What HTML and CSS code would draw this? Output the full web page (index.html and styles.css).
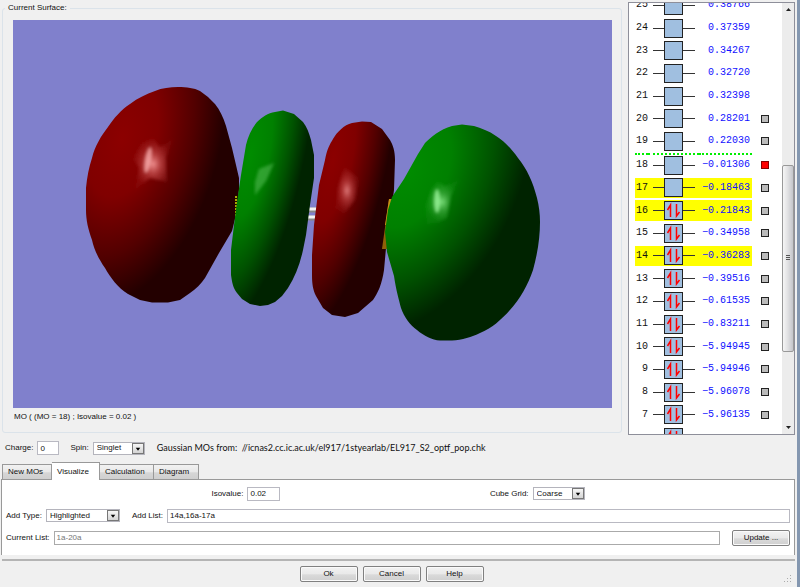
FILE: index.html
```html
<!DOCTYPE html>
<html lang="en">
<head>
    <meta charset="UTF-8">
    <meta name="viewport" content="width=device-width, initial-scale=1.0">
    <title>MOs</title>
    <link rel="stylesheet" href="styles.css">
</head>
<body>
    <main class="window">
        <div class="top">
            <fieldset class="surface">
                <legend>Current Surface:</legend>
                <svg class="scene" viewBox="13 20 599 388" preserveAspectRatio="none" role="img" aria-label="Molecular orbital surface">
                    <defs>
                        <radialGradient id="red1" gradientUnits="userSpaceOnUse" cx="0" cy="0" r="1" gradientTransform="translate(122 138) rotate(14) scale(98 172)">
                            <stop offset="0" stop-color="#8c0000"/>
                            <stop offset="0.35" stop-color="#800000"/>
                            <stop offset="0.7" stop-color="#520000"/>
                            <stop offset="1" stop-color="#230000"/>
                        </radialGradient>
                        <radialGradient id="green1" gradientUnits="userSpaceOnUse" cx="0" cy="0" r="1" gradientTransform="translate(250 155) rotate(12) scale(54 180)">
                            <stop offset="0" stop-color="#008c00"/>
                            <stop offset="0.35" stop-color="#008000"/>
                            <stop offset="0.7" stop-color="#005200"/>
                            <stop offset="1" stop-color="#002300"/>
                        </radialGradient>
                        <radialGradient id="red2" gradientUnits="userSpaceOnUse" cx="0" cy="0" r="1" gradientTransform="translate(333 160) rotate(12) scale(54 180)">
                            <stop offset="0" stop-color="#8c0000"/>
                            <stop offset="0.35" stop-color="#800000"/>
                            <stop offset="0.7" stop-color="#520000"/>
                            <stop offset="1" stop-color="#230000"/>
                        </radialGradient>
                        <radialGradient id="green2" gradientUnits="userSpaceOnUse" cx="0" cy="0" r="1" gradientTransform="translate(408 170) rotate(24) scale(112 172)">
                            <stop offset="0" stop-color="#008c00"/>
                            <stop offset="0.35" stop-color="#008000"/>
                            <stop offset="0.7" stop-color="#005200"/>
                            <stop offset="1" stop-color="#002300"/>
                        </radialGradient>
                        <radialGradient id="shineRed">
                            <stop offset="0" stop-color="#f09090"/>
                            <stop offset="0.4" stop-color="#c85050" stop-opacity="0.7"/>
                            <stop offset="1" stop-color="#a02020" stop-opacity="0.2"/>
                        </radialGradient>
                        <radialGradient id="shineGreen">
                            <stop offset="0" stop-color="#90f090"/>
                            <stop offset="0.4" stop-color="#50b850" stop-opacity="0.7"/>
                            <stop offset="1" stop-color="#20a020" stop-opacity="0.2"/>
                        </radialGradient>
                        <filter id="soft" x="-30%" y="-30%" width="160%" height="160%">
                            <feGaussianBlur stdDeviation="1.5"/>
                        </filter>
                    </defs>
                    <rect x="13" y="20" width="599" height="388" fill="#8080cc"/>
                    <!-- bonds -->
                    <path d="M308 210h9M308 218h9" stroke="#888" stroke-width="5"/>
                    <path d="M308 209h9M308 217h9" stroke="#f4f4f4" stroke-width="3"/>
                    <!-- lobes, left to right -->
                    <path fill="url(#red1)" d="M178 87C187 87 194 88 200 91L208 97L215 104C220 110 223 117 226 126L232 148L236 165L239 178V190L236 215L232 231L219 253L205 278C201 284 196 289 190 293L180 300L168 302.500H152L140 300L128 294C118 288 110 277 105 268C98 258 94 249 92 240C88 229 86 220 86 210V188C87 177 89 167 92 158C95 146 101 136 108 127C114 118 121 110 130 104C138 98 146 94 155 91C162 88 170 87 178 87Z"/>
                    <path d="M236 196v20" stroke="#aa0" stroke-width="2" stroke-dasharray="2 1"/>
                    <path fill="url(#green1)" d="M275 112L283 110.500L294 114L303 122C307 127 309 133 311 140L314 155V178L310 205L306 235L303 250C300 264 295 277 288 288L282 296L275 302L268 305L260 306L250 304L242 299L237 293C233 288 232 282 231 275V250L234 225L238 195L241 175L246 145C248 136 252 128 257 122C262 117 268 113 275 112Z"/>
                    <path fill="url(#red2)" d="M352 123L362 121.500L371 122L382 129L390 140C393 145 395 151 395 160L394 190L390 220L386 248L384 270C382 284 378 293 373 300L358 313L345 317L332 315L323 308L316 296C313 290 312 284 312 275V255L314 225L319 185L325 160C327 149 330 144 333 139C337 132 344 125 352 123Z"/>
                    <path d="M389 199h4l-5 50h-6z" fill="#906008"/>
                    <path d="M389 199h3l-3 26h-4z" fill="#c89018"/>
                    <path fill="url(#green2)" d="M452 126L462 124.500L474 126C481 128 489 131 496 136C504 141 511 148 518 158C527 169 533 182 537 198C539 206 540 214 540 222C540 236 538 252 533 270C528 285 520 299 510 310C501 320 492 328 480 333C472 337 462 340 452 340.500H440C432 340 424 336 417 330C410 325 404 317 401 308C399 300 396 290 394 276L387 252L385 232L388 210L392 197L404 179L418 154L425 143C430 138 440 129 452 126Z"/>
                    <!-- specular spots -->
                    <g filter="url(#soft)">
                        <path d="M142 143L153 138L160 147L173 139L166 157L167 182L150 178L135 190L139 168L133 158Z" fill="url(#shineRed)"/>
                        <ellipse cx="148" cy="160" rx="3" ry="13" transform="rotate(10 148 160)" fill="#ffb8b8" opacity="0.7"/>
                        <path d="M259 169L274 163L266 181L255 195L255 182Z" fill="#50b850" opacity="0.6"/>
                        <path d="M344 167L359 178L355 200L344 214L335 208L338 188Z" fill="url(#shineRed)" opacity="0.85"/>
                        <path d="M437 181L445 186L459 180L451 196L447 218L437 223L427 224L425 208L431 190Z" fill="url(#shineGreen)" opacity="0.85"/>
                        <ellipse cx="437" cy="201" rx="3" ry="12" fill="#a8ffa8" opacity="0.7"/>
                    </g>
                </svg>
                <p class="caption">MO ( (MO = 18) ; Isovalue = 0.02 )</p>
            </fieldset>

            <div class="levels">
                <div class="levels-view">
                    <table class="levels-table" aria-label="Orbital energies">
                        <tbody id="levels"></tbody>
                    </table>
                </div>
                <div class="scrollbar" aria-hidden="true">
                    <svg class="scroll-arrow" viewBox="0 0 12 14"><path d="M4 8h5l-2.500-3z" fill="#222"/></svg>
                    <div class="scroll-before"></div>
                    <div class="scroll-thumb"><i></i></div>
                    <div class="scroll-after"></div>
                    <svg class="scroll-arrow" viewBox="0 0 12 14"><path d="M4 6h5l-2.500 3z" fill="#222"/></svg>
                </div>
            </div>
        </div>

        <div class="source-row">
            <label for="charge">Charge:</label>
            <input class="field charge" id="charge" type="text" value="0">
            <label for="spin">Spin:</label>
            <span class="combo combo-short">
                <select id="spin"><option>Singlet</option></select>
                <svg class="combo-arrow" viewBox="0 0 12 12"><path d="M3 5h6l-3 4z"/></svg>
            </span>
            <span class="source">Gaussian MOs from:&nbsp; //icnas2.cc.ic.ac.uk/el917/1styearlab/EL917_S2_optf_pop.chk</span>
        </div>

        <div class="tabs" role="tablist">
            <button class="tab tab-new" role="tab">New MOs</button>
            <button class="tab tab-visualize active" role="tab" aria-selected="true">Visualize</button>
            <button class="tab tab-calculation" role="tab">Calculation</button>
            <button class="tab tab-diagram" role="tab">Diagram</button>
        </div>
        <div class="panel" role="tabpanel">
            <div class="row row-spread">
                <div class="pair">
                    <label for="isovalue">Isovalue:</label>
                    <input class="field isovalue" id="isovalue" type="text" value="0.02">
                </div>
                <div class="pair">
                    <label for="grid">Cube Grid:</label>
                    <span class="combo combo-short">
                        <select id="grid"><option>Coarse</option></select>
                        <svg class="combo-arrow" viewBox="0 0 12 12"><path d="M3 5h6l-3 4z"/></svg>
                    </span>
                </div>
            </div>
            <div class="row">
                <label for="addType">Add Type:</label>
                <span class="combo combo-long">
                    <select id="addType"><option>Highlighted</option></select>
                    <svg class="combo-arrow" viewBox="0 0 12 12"><path d="M3 5h6l-3 4z"/></svg>
                </span>
                <label class="list-label" for="addList">Add List:</label>
                <input class="field grow" id="addList" type="text" value="14a,16a-17a">
            </div>
            <div class="row">
                <label for="currentList">Current List:</label>
                <input class="field grow" id="currentList" type="text" value="1a-20a" disabled>
                <button class="button update">Update ...</button>
            </div>
        </div>

        <footer class="footer">
            <button class="button">Ok</button>
            <button class="button">Cancel</button>
            <button class="button">Help</button>
            <svg class="grip" viewBox="0 0 8 8" aria-hidden="true"><path d="M6 0h1v1h-1zM3 3h1v1h-1zM6 3h1v1h-1zM0 6h1v1h-1zM3 6h1v1h-1zM6 6h1v1h-1z" fill="#aaa"/></svg>
        </footer>
    </main>

    <script>
        const levels = [
            [25, '0.38766'], [24, '0.37359'], [23, '0.34267'], [22, '0.32720'],
            [21, '0.32398'], [20, '0.28201'], [19, '0.22030'], [18, '-0.01306'],
            [17, '-0.18463'], [16, '-0.21843'], [15, '-0.34958'], [14, '-0.36283'],
            [13, '-0.39516'], [12, '-0.61535'], [11, '-0.83211'], [10, '-5.94945'],
            [9, '-5.94946'], [8, '-5.96078'], [7, '-5.96135'], [6, '']
        ];
        const highlighted = [17, 16, 14];
        const homo = 16;
        const current = 18;

        function orbital(n) {
            const arrows = n <= homo
                ? '<path d="M17.500 16V4L14.500 9M23.500 3V15L26.500 11" fill="none" stroke="#f00" stroke-width="1.500"/>'
                : '';
            return '<svg class="orbital" viewBox="0 0 42 19">' +
                '<path d="M0 9.500H42" stroke="#333"/>' +
                '<rect x="11.500" y="0.500" width="18" height="18" fill="#a0bfe0" stroke="#222"/>' +
                arrows + '</svg>';
        }

        document.getElementById('levels').innerHTML = levels.map(function([n, energy]) {
            const classes = [];
            if (highlighted.includes(n)) classes.push('highlighted');
            if (n === current) classes.push('divider');
            // only surfaces that have been computed get a box
            const box = n <= 20 && n > 6
                ? `<input type="checkbox" aria-label="Surface ${n}"${n === current ? ' checked' : ''}>`
                : '';
            return `<tr class="${classes.join(' ')}">
                <td class="number">${n > 6 ? n : ''}</td>
                <td class="diagram">${orbital(n)}</td>
                <td class="energy">${energy.replace('-', '−')}</td>
                <td class="toggle">${box}</td>
            </tr>`;
        }).join('');
    </script>
</body>
</html>
```
FILE: styles.css
```css
* {
    box-sizing: border-box;
}
body {
    margin: 0;
    font-family: "Liberation Sans", Arial, sans-serif;
    font-size: 8px;
    line-height: 10px;
    color: #111;
    background: #f0f0f0;
}
input, select, button {
    font: inherit;
    color: inherit;
    margin: 0;
}
.window {
    display: flex;
    flex-direction: column;
    height: 100vh;
    padding: 2px 2px 0 2px;
    border-right: 3px solid #8497b0;
}

/* surface view and energy levels */
.top {
    display: flex;
    flex: 1;
    min-height: 0;
    gap: 6px;
}
.surface {
    display: flex;
    flex-direction: column;
    flex: 1;
    min-width: 0;
    margin: 0 0 2px;
    padding: 6px 9px 10px 10px;
    border: 1px solid #dbe3ea;
    border-radius: 3px;
}
.surface legend {
    padding: 0 3px;
    margin-left: -8px;
    line-height: 12px;
}
.scene {
    display: block;
    flex: 1;
    width: 100%;
    min-height: 0;
}
.caption {
    margin: 4px 0 0 1px;
}
.levels {
    display: flex;
    width: 167px;
    border: 1px solid #8e8f9a;
    background: #fff;
}
.levels-view {
    display: flex;
    flex: 1;
    overflow: hidden;
    padding-left: 6px;
}
.levels-table {
    width: 100%;
    margin: -9px 0 -15px;
    table-layout: fixed;
    border-spacing: 0;
    font-family: "Liberation Mono", "Courier New", monospace;
    font-size: 10px;
    line-height: 12px;
}
.levels-table td {
    padding: 0;
    border-top: 1px solid transparent;
    border-bottom: 1px solid transparent;
    background-clip: padding-box;
}
.levels-table .number {
    width: 13px;
    text-align: right;
}
.levels-table .diagram {
    width: 51px;
    padding-left: 5px;
}
.levels-table .energy {
    width: 53px;
    padding-right: 2px;
    text-align: right;
    color: #11f;
}
.levels-table .toggle {
    padding-left: 9px;
}
.highlighted td:not(.toggle) {
    background-color: #ff0;
}
.levels-table .divider td:not(.toggle) {
    border-top: 2px dotted #0e0;
}
.orbital {
    display: block;
    width: 42px;
    height: 19px;
}
.toggle input {
    display: block;
    appearance: none;
    width: 8px;
    height: 8px;
    border: 1px solid #222;
    background: #bbb;
}
.toggle input:checked {
    border-color: #800;
    background: #f00;
}
.scrollbar {
    display: flex;
    flex-direction: column;
    width: 12px;
    background: #ececec;
}
.scroll-arrow {
    width: 12px;
    height: 14px;
}
.scroll-before {
    flex: 148;
}
.scroll-after {
    flex: 68;
}
.scroll-thumb {
    display: flex;
    align-items: center;
    justify-content: center;
    flex: 186;
    border: 1px solid #999;
    border-radius: 2px;
    background: linear-gradient(to right, #f6f6f6, #e2e2e4 45%, #c4c5ca);
}
.scroll-thumb i {
    width: 4px;
    height: 6px;
    background: repeating-linear-gradient(#555 0 1px, transparent 1px 2px);
}

/* charge, spin, file */
.source-row {
    display: flex;
    align-items: center;
    gap: 4px;
    padding: 6px 3px 7px;
}
.field {
    height: 14px;
    padding: 0 2px;
    border: 1px solid #b9b9c2;
    border-radius: 0;
    background: #fff;
    min-width: 0;
}
.field:disabled {
    color: #777;
    border-color: #aaa;
}
.charge {
    width: 22px;
    margin-right: 7px;
}
.source {
    margin-left: 8px;
    font-family: Lato, "Segoe UI", sans-serif;
    font-size: 9px;
}
.combo {
    position: relative;
    display: flex;
    height: 13px;
    border: 1px solid #b4b4bc;
    background: #fff;
}
.combo select {
    appearance: none;
    width: 100%;
    padding: 0 3px;
    border: none;
    background: none;
}
.combo-short {
    width: 52px;
}
.combo-long {
    width: 74px;
}
.combo-arrow {
    position: absolute;
    top: 0;
    right: 0;
    width: 12px;
    height: 11px;
    border: 1px solid #777;
    background: linear-gradient(#f6f6f6, #d4d4d4);
    pointer-events: none;
}

/* tabs */
.tabs {
    display: flex;
    align-items: flex-end;
    height: 17px;
}
.tab {
    height: 15px;
    padding: 0 0 0 5px;
    border: 1px solid #999;
    border-left-width: 0;
    border-bottom: none;
    text-align: left;
    background: linear-gradient(#f2f2f2, #e8e8e8 50%, #d6d6d6 55%, #cfcfcf);
}
.tab-new {
    width: 50px;
    border-left-width: 1px;
}
.tab-visualize {
    width: 48px;
}
.tab-calculation {
    width: 54px;
}
.tab-diagram {
    width: 45px;
}
.tab.active {
    height: 18px;
    margin-bottom: -1px;
    background: #fff;
    z-index: 1;
}
.panel {
    display: flex;
    flex-direction: column;
    gap: 7px;
    margin-left: -1px;
    padding: 6px 4px 10px;
    border: 1px solid #999;
    border-bottom: none;
    background: #fff;
}
.row {
    display: flex;
    align-items: center;
    gap: 4px;
    height: 15px;
}
.row-spread {
    justify-content: space-evenly;
}
.pair {
    display: flex;
    align-items: center;
    gap: 4px;
}
.isovalue {
    width: 33px;
}
.list-label {
    margin-left: 8px;
}
.grow {
    flex: 1;
}
.button {
    width: 58px;
    height: 16px;
    padding: 0;
    border: 1px solid #808080;
    border-radius: 2px;
    box-shadow: inset 0 0 0 1px #fafafa;
    background: linear-gradient(#f2f2f2, #e9e9e9 50%, #dadada 55%, #cfcfcf);
}
.update {
    margin-left: 8px;
}
.footer {
    position: relative;
    display: flex;
    justify-content: center;
    gap: 5px;
    margin-top: 4px;
    padding: 5px 14px 5px 0;
    border-top: 2px solid #b4b4b4;
}
.grip {
    position: absolute;
    right: 3px;
    bottom: 4px;
    width: 8px;
    height: 8px;
}
```
